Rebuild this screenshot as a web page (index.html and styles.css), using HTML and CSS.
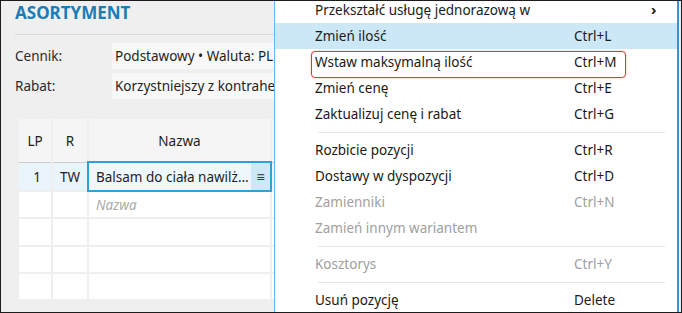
FILE: index.html
```html
<!DOCTYPE html>
<html lang="pl">
<head>
<meta charset="utf-8">
<link rel="stylesheet" href="styles.css">
</head>
<body>
<div class="frame">
  <section class="panel">
    <h1 class="title">ASORTYMENT</h1>
    <div class="rule"></div>
    <div class="form">
      <div class="label">Cennik:</div>
      <div class="value">Podstawowy • Waluta: PLN</div>
      <div class="label">Rabat:</div>
      <div class="value">Korzystniejszy z kontrahenta i cennika</div>
    </div>
    <div class="table">
      <div class="tr head">
        <div class="td">LP</div>
        <div class="td">R</div>
        <div class="td">Nazwa</div>
        <div class="td">Ilość</div>
      </div>
      <div class="tr r1 active">
        <div class="td num">1</div>
        <div class="td">TW</div>
        <div class="td name sel"><span class="txt">Balsam do ciała nawilżający 200 ml</span><span class="btn">≡</span></div>
        <div class="td"></div>
      </div>
      <div class="tr r2">
        <div class="td"></div>
        <div class="td"></div>
        <div class="td name"><span class="ph">Nazwa</span></div>
        <div class="td"></div>
      </div>
      <div class="tr r3">
        <div class="td"></div><div class="td"></div><div class="td"></div><div class="td"></div>
      </div>
      <div class="tr r4">
        <div class="td"></div><div class="td"></div><div class="td"></div><div class="td"></div>
      </div>
      <div class="tr r5">
        <div class="td"></div><div class="td"></div><div class="td"></div><div class="td"></div>
      </div>
    </div>
  </section>

  <ul class="menu">
    <li class="item"><span>Przekształć usługę jednorazową w</span><span></span><span class="arrow">›</span></li>
    <li class="item hover"><span>Zmień ilość</span><span>Ctrl+L</span><span></span></li>
    <li class="item marked"><span>Wstaw maksymalną ilość</span><span>Ctrl+M</span><span></span></li>
    <li class="item"><span>Zmień cenę</span><span>Ctrl+E</span><span></span></li>
    <li class="item"><span>Zaktualizuj cenę i rabat</span><span>Ctrl+G</span><span></span></li>
    <li class="sep"></li>
    <li class="item"><span>Rozbicie pozycji</span><span>Ctrl+R</span><span></span></li>
    <li class="item"><span>Dostawy w dyspozycji</span><span>Ctrl+D</span><span></span></li>
    <li class="item off"><span>Zamienniki</span><span>Ctrl+N</span><span></span></li>
    <li class="item off"><span>Zamień innym wariantem</span><span></span><span></span></li>
    <li class="sep"></li>
    <li class="item off"><span>Kosztorys</span><span>Ctrl+Y</span><span></span></li>
    <li class="sep"></li>
    <li class="item"><span>Usuń pozycję</span><span>Delete</span><span></span></li>
  </ul>
</div>
</body>
</html>
```
FILE: styles.css
```css
* { box-sizing: border-box; }
html, body { margin: 0; padding: 0; }
body {
  font-family: "Noto Sans", "Open Sans", sans-serif;
  font-size: 13.5px;
  color: #1e1e1e;
  background: #ffffff;
}
.frame {
  position: relative;
  width: 682px;
  height: 313px;
  border: 1px solid #1c1c1c;
  background: #efefef;
  overflow: hidden;
}
.panel {
  padding: 2px 0 0 14px;
  width: 700px;
}
.title {
  margin: 0;
  font-size: 17px;
  line-height: 20px;
  font-weight: 700;
  color: #1b7cb6;
  letter-spacing: 0;
}
.rule {
  height: 1px;
  background: #d9d9d9;
  margin: 11px 0 8px 0;
}
.form {
  display: grid;
  grid-template-columns: 97px 420px;
  grid-auto-rows: 26px;
  row-gap: 4px;
  align-items: center;
}
.label { color: #2b2b2b; line-height: 26px; }
.value {
  height: 26px;
  line-height: 26px;
  background: #f8f8f8;
  padding-left: 3px;
  white-space: nowrap;
  color: #1e1e1e;
}
.table {
  margin: 20px 0 0 4px;
  display: flex;
  flex-direction: column;
  gap: 2px;
}
.tr {
  display: grid;
  grid-template-columns: 32px 34px 181px 300px;
  column-gap: 2px;
  height: 26px;
}
.td {
  background: #ffffff;
  display: flex;
  align-items: center;
  justify-content: center;
  white-space: nowrap;
}
.head { height: 44px; margin-bottom: -2px; }
.head .td {
  background: #f5f5f5;
  border-bottom: 1px solid #cdcdcd;
}
.r1 { height: 27px; }
.r2 { height: 25px; }
.r4 { height: 25px; }
.r5 { height: 25px; }
.active .td { background: #eaf4fb; }
.num { justify-content: flex-end; padding-right: 10px; }
.name { justify-content: flex-start; padding-left: 7px; }
.sel {
  position: relative;
  outline: 2px solid #2aa2de;
  outline-offset: 0;
  z-index: 1;
  padding-right: 0;
}
.active .sel { background: #eef7fc; }
.txt {
  flex: 1;
  min-width: 0;
  overflow: hidden;
  text-overflow: ellipsis;
  padding-right: 1px;
}
.btn {
  width: 19px;
  align-self: stretch;
  background: #cde8f6;
  display: flex;
  align-items: center;
  justify-content: center;
  font-size: 14px;
  color: #333;
}
.ph { color: #ababab; font-style: italic; }

.menu {
  position: absolute;
  left: 273px;
  top: -4px;
  width: 405px;
  margin: 0;
  padding: 0;
  list-style: none;
  background: #ffffff;
  border-left: 1px solid #6fb6e6;
  border-right: 2px solid #3e90d0;
  z-index: 5;
}
.item {
  position: relative;
  display: grid;
  grid-template-columns: 259px 1fr 20px;
  height: 26px;
  line-height: 26px;
  padding-left: 40px;
  padding-right: 6px;
  color: #1a1a1a;
  white-space: nowrap;
}
.item.hover { background: #cce8f6; }
.item.off { color: #a0a0a0; }
.arrow { font-weight: 700; font-size: 15px; line-height: 24px; color: #222; }
.marked::after {
  content: "";
  position: absolute;
  left: 36px;
  top: 2px;
  width: 313px;
  height: 25px;
  border: 1.5px solid #e2383d;
  border-radius: 4px;
  box-shadow: 0 0 2px rgba(226, 56, 61, 0.45);
}
.sep {
  height: 10px;
  display: flex;
  align-items: center;
  padding: 0 12px 0 43px;
}
.sep::before {
  content: "";
  flex: 1;
  height: 1px;
  background: #e6e6e6;
}
```
